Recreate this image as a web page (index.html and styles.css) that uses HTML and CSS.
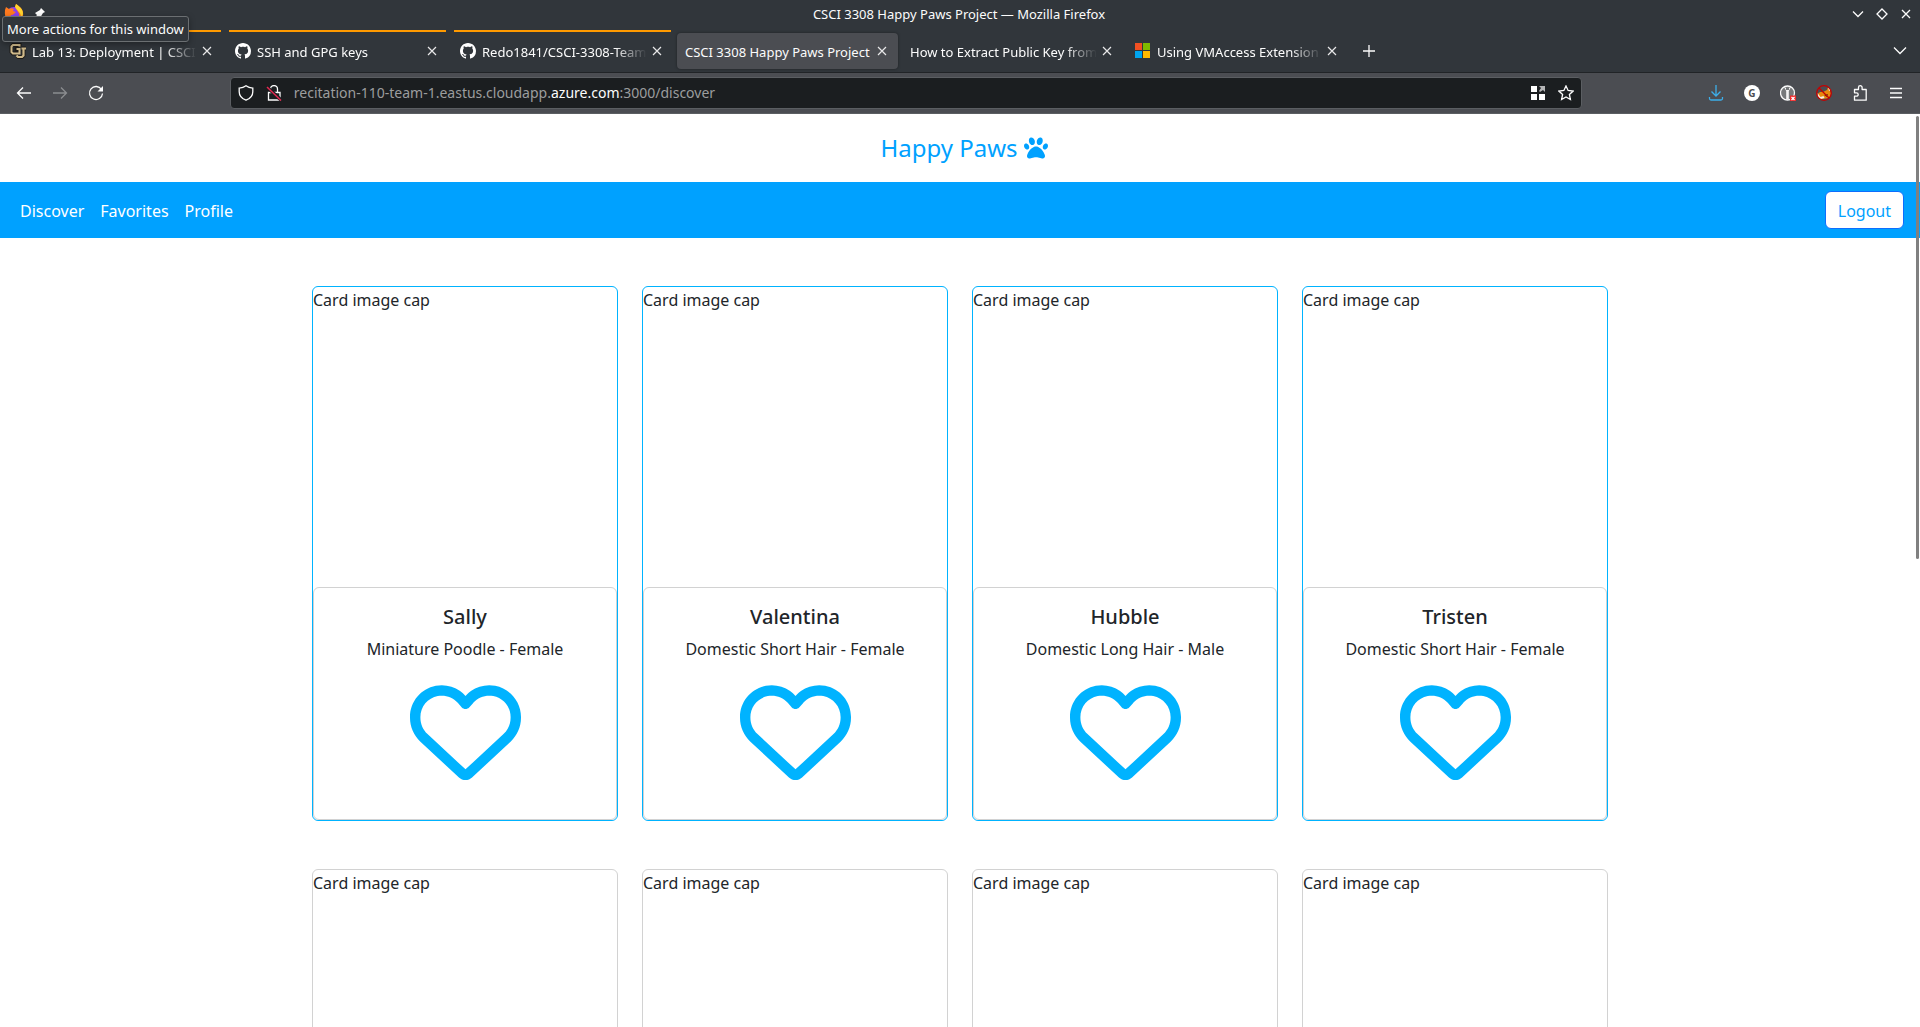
FILE: index.html
```html
<!DOCTYPE html>
<html lang="en">
<head>
<meta charset="utf-8">
<title>CSCI 3308 Happy Paws Project</title>
<link rel="stylesheet" href="styles.css">
</head>
<body>
<svg class="sprite" aria-hidden="true">
  <symbol id="heart" viewBox="0 0 512 512"><path d="M225.8 468.2l-2.5-2.3L48.1 303.2C17.4 274.7 0 234.7 0 192.8v-3.3c0-70.4 50-130.8 119.2-144C158.6 37.9 198.9 47 231 69.6c9 6.4 17.4 13.8 25 22.3c4.2-4.8 8.7-9.2 13.5-13.3c3.7-3.2 7.5-6.2 11.5-9c0 0 0 0 0 0C313.1 47 353.4 37.9 392.8 45.4C462 58.6 512 119.1 512 189.5v3.3c0 41.9-17.4 81.9-48.1 110.4L288.7 465.9l-2.5 2.3c-8.2 7.6-19 11.9-30.2 11.9s-22-4.2-30.2-11.9zM239.1 145c-.4-.3-.7-.7-1-1.1l-17.8-20c0 0-.1-.1-.1-.1c0 0 0 0 0 0c-23.1-25.9-58-37.7-92-31.2C81.6 101.5 48 142.1 48 189.5v3.3c0 28.5 11.9 55.8 32.8 75.2L256 430.7 431.2 268c20.9-19.4 32.8-46.7 32.8-75.2v-3.3c0-47.3-33.6-88-80.1-96.9c-34-6.5-69 5.4-92 31.2c0 0 0 0-.1 .1s0 0-.1 .1l-17.8 20c-.3 .4-.7 .7-1 1.1c-4.5 4.5-10.6 7-16.9 7s-12.4-2.5-16.9-7z"/></symbol>
  <symbol id="close" viewBox="0 0 16 16"><path d="M4 4l8 8M12 4l-8 8" fill="none" stroke="currentColor" stroke-width="1.2"/></symbol>
  <symbol id="github" viewBox="0 0 16 16"><path d="M8 0C3.58 0 0 3.58 0 8c0 3.54 2.29 6.53 5.47 7.59.4.07.55-.17.55-.38 0-.19-.01-.82-.01-1.49-2.01.37-2.53-.49-2.69-.94-.09-.23-.48-.94-.82-1.13-.28-.15-.68-.52-.01-.53.63-.01 1.08.58 1.23.82.72 1.21 1.87.87 2.33.66.07-.52.28-.87.51-1.07-1.78-.2-3.64-.89-3.64-3.95 0-.87.31-1.59.82-2.15-.08-.2-.36-1.02.08-2.12 0 0 .67-.21 2.2.82.64-.18 1.32-.27 2-.27s1.36.09 2 .27c1.53-1.04 2.2-.82 2.2-.82.44 1.1.16 1.92.08 2.12.51.56.82 1.27.82 2.15 0 3.07-1.87 3.75-3.65 3.95.29.25.54.73.54 1.48 0 1.07-.01 1.93-.01 2.2 0 .21.15.46.55.38A8.01 8.01 0 0 0 16 8c0-4.42-3.58-8-8-8z" fill="#fff"/></symbol>
</svg>

<div class="browser">
  <header class="titlebar">
    <div class="title-icons">
      <svg width="20" height="20" viewBox="0 0 20 20"><circle cx="10" cy="11" r="8" fill="#8a3ff0"/><path d="M1 6l1-3 3 2c2-1 3-1 5 0l-1 2 3 1c-2 1-2 3-5 3-1 3 2 5 5 4 3-2 4-4 2-7L11 3l1-3c3 2 6 4 7 8 1 7-3 12-9 12S0 14 1 6z" fill="#ff7a1f"/><path d="M11 3l1-3c4 3 7 5 7 10-1 3-2 3-2 3 0-5-4-6-6-10z" fill="#ffd42e"/></svg>
      <svg width="12" height="12" viewBox="0 0 12 12"><path d="M7 0l4 4-2 1-3 5-2-2-4 3 3-4-2-2 5-3z" fill="#fcfcfc"/></svg>
    </div>
    <span class="window-title">CSCI 3308 Happy Paws Project — Mozilla Firefox</span>
    <div class="window-buttons">
      <button class="window-button" aria-label="Minimize"><svg width="16" height="16" viewBox="0 0 16 16"><path d="M3 5.500l5 5 5-5"/></svg></button>
      <button class="window-button" aria-label="Maximize"><svg width="16" height="16" viewBox="0 0 16 16"><path d="M8 3l5 5-5 5-5-5z"/></svg></button>
      <button class="window-button" aria-label="Close"><svg width="16" height="16" viewBox="0 0 16 16"><path d="M4 4l8 8M12 4l-8 8"/></svg></button>
    </div>
    <div class="tooltip" role="tooltip">More actions for this window</div>
  </header>

  <nav class="tabstrip" aria-label="Tabs">
    <div class="tab tab-marked">
      <svg class="favicon" viewBox="0 0 16 16"><path d="M9.500 3.500V2H3L1.500 3.500V9L3 10.500h4M9.500 6H6.500v2.500M7 12.500L8.500 14H12l1.500-1.500V5.500H16M7.500 5.500v7" fill="none" stroke="#1d1a18" stroke-width="4"/><path d="M9.500 3.500V2H3L1.500 3.500V9L3 10.500h6.500V6H6.500" fill="none" stroke="#cfb98a" stroke-width="2"/><path d="M6.500 12.500L8 14h4l1.500-1.500V5.500M11.500 5.500H16" fill="none" stroke="#cfb98a" stroke-width="2.200"/></svg>
      <span class="tab-label">Lab 13: Deployment | CSCI 3308</span>
      <button class="tab-close" aria-label="Close tab"><svg width="16" height="16"><use href="#close"/></svg></button>
    </div>
    <div class="tab tab-marked">
      <svg class="favicon"><use href="#github"/></svg>
      <span class="tab-label">SSH and GPG keys</span>
      <button class="tab-close" aria-label="Close tab"><svg width="16" height="16"><use href="#close"/></svg></button>
    </div>
    <div class="tab tab-marked">
      <svg class="favicon"><use href="#github"/></svg>
      <span class="tab-label">Redo1841/CSCI-3308-Team-1</span>
      <button class="tab-close" aria-label="Close tab"><svg width="16" height="16"><use href="#close"/></svg></button>
    </div>
    <div class="tab tab-active">
      <span class="tab-label tab-label-full">CSCI 3308 Happy Paws Project</span>
      <button class="tab-close" aria-label="Close tab"><svg width="16" height="16"><use href="#close"/></svg></button>
    </div>
    <div class="tab">
      <span class="tab-label">How to Extract Public Key from a</span>
      <button class="tab-close" aria-label="Close tab"><svg width="16" height="16"><use href="#close"/></svg></button>
    </div>
    <div class="tab">
      <svg class="favicon" viewBox="0 0 16 16"><path d="M0 0h7v7H0z" fill="#f25022"/><path d="M8 0h7v7H8z" fill="#7fba00"/><path d="M0 8h7v7H0z" fill="#00a4ef"/><path d="M8 8h7v7H8z" fill="#ffb900"/></svg>
      <span class="tab-label">Using VMAccess Extension</span>
      <button class="tab-close" aria-label="Close tab"><svg width="16" height="16"><use href="#close"/></svg></button>
    </div>
    <button class="strip-button" aria-label="New tab"><svg width="16" height="16" viewBox="0 0 16 16"><path d="M8 2v12M2 8h12"/></svg></button>
    <button class="strip-button strip-end" aria-label="List all tabs"><svg width="16" height="16" viewBox="0 0 16 16"><path d="M2 4.500l6 6 6-6"/></svg></button>
  </nav>

  <div class="toolbar">
    <button class="tool" aria-label="Back"><svg viewBox="0 0 16 16"><path d="M15 8H1.500M7 2.500L1.500 8 7 13.500"/></svg></button>
    <button class="tool tool-off" aria-label="Forward" disabled><svg viewBox="0 0 16 16"><path d="M1 8h13.500M9 2.500L14.500 8 9 13.500"/></svg></button>
    <button class="tool" aria-label="Reload"><svg viewBox="0 0 16 16"><path d="M13.500 4.500A6.500 6.500 0 1 0 14.500 8.500"/><path d="M9.500 6.500h5.500V1z" fill="currentColor" stroke="none"/></svg></button>
    <div class="spacer"></div>
    <div class="urlbar">
      <svg viewBox="0 0 16 16"><path d="M8 .8C6 2.300 3.500 3 1.200 3.200v3.500c0 4 3 7 6.800 8.500 3.800-1.500 6.800-4.500 6.800-8.500V3.200C12.500 3 10 2.300 8 .8z"/></svg>
      <svg class="lock" viewBox="0 0 16 16"><path d="M4.500 7V4a3.500 3.500 0 0 1 7 0v3M2.500 7.500h11.500v7.500H2.500z"/><path d="M1 2l14 13" stroke="#1b1e20" stroke-width="3.500"/><path d="M1 2l14 13.500" stroke="#e22850" stroke-width="1.500"/></svg>
      <div class="address" role="textbox" aria-label="Address">recitation-110-team-1.eastus.cloudapp.<strong>azure.com</strong>:3000/discover</div>
      <svg viewBox="0 0 16 16"><path d="M1 1h6v6H1zM1 9h6v6H1zM9 9h6v6H9z" fill="#fff" stroke="none"/><path d="M9 1h6v6l-2-2-3 2-1-1 2-3z" fill="#b5b6b7" stroke="none"/></svg>
      <svg class="star" viewBox="0 0 16 16"><path d="M8 .9l2.100 4.600 5 .6-3.700 3.400 1 5L8 12l-4.400 2.500 1-5L.9 6.100l5-.6z"/></svg>
    </div>
    <div class="spacer"></div>
    <button class="tool tool-blue" aria-label="Downloads"><svg viewBox="0 0 16 16"><path d="M8 0v11M3.500 6.500L8 11l4.500-4.500M1.500 12v1.500a1.500 1.500 0 0 0 1.500 1.500h10a1.500 1.500 0 0 0 1.500-1.500V12"/></svg></button>
    <button class="tool" aria-label="Account extension"><span class="g-badge">G</span></button>
    <button class="tool" aria-label="Script extension"><svg viewBox="0 0 16 16"><circle cx="7.500" cy="8" r="7" fill="#77797b"/><path d="M4 2l2.200 4v8.500h2.600V6L11 2 9 3v2H6V3z" fill="#f4f4f4" stroke="none"/><path d="M10 10.500h6v6h-6z" fill="#f02a2a" stroke="none"/><path d="M11.500 12l3 3m0-3l-3 3" stroke="#fff"/></svg></button>
    <button class="tool" aria-label="Fox extension"><svg viewBox="0 0 16 16"><path d="M1.500 9l1.500 4 3 1 7-1 2-4-1-5-2-2-1 3-4 2-3 0z" fill="#e8870e" stroke="none"/><path d="M1.500 8l3 4 3-1 1 2-4 1-3-3zM12 2l3 3-2 1z" fill="#f2ece4" stroke="none"/><path d="M8 10l4-1-1 3z" fill="#5a3310" stroke="none"/><circle cx="8" cy="8" r="7.300" stroke="#c50000"/><path d="M3 3l10 10" stroke="#c50000"/></svg></button>
    <button class="tool" aria-label="Extensions"><svg viewBox="0 0 16 16"><path d="M2.500 15.200v-4h2a1.700 1.700 0 0 0 0-3.400h-2V4.500h4V2.500a1.800 1.800 0 0 1 3.600 0v2h4.100v10.700z" stroke-linejoin="round"/></svg></button>
    <button class="tool" aria-label="Menu"><svg viewBox="0 0 16 16"><path d="M2 3.500h12M2 8h12M2 12.500h12"/></svg></button>
  </div>

  <div class="page">
    <header class="site-header"><a class="brand" href="#">Happy Paws <svg width="24" height="24" viewBox="0 0 512 512"><path fill="currentColor" d="M226.500 92.900c14.300 42.900-.3 86.200-32.600 96.800s-70.100-15.600-84.400-58.500s.3-86.200 32.600-96.800s70.100 15.600 84.400 58.500zM100.400 198.600c18.900 32.400 14.300 70.100-10.200 84.100s-59.700-.9-78.500-33.300S-2.700 179.300 21.800 165.300s59.700 .9 78.500 33.300zM69.200 401.200C121.600 259.900 214.700 224 256 224s134.400 35.900 186.800 177.200c3.600 9.700 5.200 20.100 5.200 30.500v1.600c0 25.800-20.900 46.700-46.700 46.700c-11.500 0-22.900-1.400-34-4.200l-88-22c-15.300-3.800-31.300-3.800-46.600 0l-88 22c-11.100 2.800-22.500 4.200-34 4.200C84.900 480 64 459.100 64 433.300v-1.600c0-10.400 1.600-20.800 5.200-30.500zM421.800 282.700c-24.500-14-29.100-51.700-10.200-84.100s54-47.300 78.500-33.300s29.100 51.700 10.200 84.100s-54 47.300-78.500 33.300zM310.100 189.700c-32.300-10.600-46.900-53.900-32.600-96.800s52.100-69.100 84.400-58.500s46.900 53.900 32.600 96.800s-52.100 69.100-84.400 58.500z"/></svg></a></header>
    <nav class="navbar" aria-label="Site">
      <a class="nav-link" href="#">Discover</a>
      <a class="nav-link" href="#">Favorites</a>
      <a class="nav-link" href="#">Profile</a>
      <button class="logout">Logout</button>
    </nav>
    <main class="cards">
      <article class="card card-pet"><div class="card-image">Card image cap</div><div class="card-body"><h5>Sally</h5><p>Miniature Poodle - Female</p><button class="like" aria-label="Favorite Sally"><svg><use href="#heart"/></svg></button></div></article>
      <article class="card card-pet"><div class="card-image">Card image cap</div><div class="card-body"><h5>Valentina</h5><p>Domestic Short Hair - Female</p><button class="like" aria-label="Favorite Valentina"><svg><use href="#heart"/></svg></button></div></article>
      <article class="card card-pet"><div class="card-image">Card image cap</div><div class="card-body"><h5>Hubble</h5><p>Domestic Long Hair - Male</p><button class="like" aria-label="Favorite Hubble"><svg><use href="#heart"/></svg></button></div></article>
      <article class="card card-pet"><div class="card-image">Card image cap</div><div class="card-body"><h5>Tristen</h5><p>Domestic Short Hair - Female</p><button class="like" aria-label="Favorite Tristen"><svg><use href="#heart"/></svg></button></div></article>
      <article class="card"><div class="card-image">Card image cap</div></article>
      <article class="card"><div class="card-image">Card image cap</div></article>
      <article class="card"><div class="card-image">Card image cap</div></article>
      <article class="card"><div class="card-image">Card image cap</div></article>
    </main>
    <div class="scroll-thumb"></div>
  </div>
</div>
</body>
</html>
```
FILE: styles.css
```css
* { box-sizing: border-box; }
body {
  margin: 0;
  font-family: "Noto Sans", "Open Sans", sans-serif;
  font-size: 16px;
  line-height: 24px;
  color: #212529;
}
button {
  font: inherit;
  color: inherit;
  background: none;
  border: 0;
  padding: 0;
}
a { text-decoration: none; }
svg { display: block; flex: none; }
.sprite { position: absolute; width: 0; height: 0; }

.browser {
  height: 100vh;
  display: flex;
  flex-direction: column;
  overflow: hidden;
}

/* Window chrome */
.titlebar {
  position: relative;
  flex: none;
  display: grid;
  grid-template-columns: 1fr auto 1fr;
  align-items: center;
  height: 30px;
  padding: 0 6px 2px 4px;
  background: #31363b;
  color: #fcfcfc;
  font-size: 13px;
  line-height: 20px;
}
.title-icons { display: flex; align-items: center; gap: 10px; }
.window-buttons { display: flex; justify-content: flex-end; gap: 8px; }
.window-button svg, .strip-button svg, .toolbar svg {
  fill: none;
  stroke: currentColor;
  stroke-width: 1.3;
}
.tooltip {
  position: absolute;
  z-index: 2;
  left: 2px;
  top: 16px;
  padding: 2px 4px;
  border: 1px solid #6b6f72;
  border-radius: 3px;
  background: #31363b;
  box-shadow: 0 2px 6px rgba(0, 0, 0, .35);
  white-space: nowrap;
}

.tabstrip {
  flex: none;
  display: flex;
  height: 43px;
  background: #31363b;
  border-bottom: 1px solid #212427;
  color: #fcfcfc;
  font-size: 13px;
  line-height: 20px;
}
.tab {
  position: relative;
  flex: 0 1 225px;
  min-width: 0;
  display: flex;
  align-items: center;
  gap: 6px;
  height: 36px;
  margin-top: 3px;
  padding: 0 10px;
}
.tab-marked::before {
  content: "";
  position: absolute;
  left: 4px;
  right: 4px;
  top: -3px;
  height: 2px;
  background: #ff9a00;
}
.tab-active {
  flex-basis: 221px;
  margin: 3px 2px 0;
  padding: 0 8px;
  background: #4b4d52;
  border-radius: 4px;
  box-shadow: 0 0 3px rgba(0, 0, 0, .4);
}
.favicon { width: 16px; height: 16px; overflow: visible; }
.tab-label {
  flex: 1;
  min-width: 0;
  overflow: hidden;
  white-space: nowrap;
  margin-right: -4px;
  padding-top: 2px;
  mask-image: linear-gradient(to left, transparent, #000 32px);
}
.tab-label-full { mask-image: none; }
.tab-close svg { color: #e8e8e9; }
.strip-button { height: 36px; margin: 3px 11px 0; }
.strip-end { margin-left: auto; margin-right: 12px; }

.toolbar {
  flex: none;
  display: flex;
  align-items: center;
  height: 41px;
  padding: 0 6px;
  background: #4b4d52;
  border-bottom: 1px solid #5b5e62;
  color: #fcfcfc;
}
.toolbar svg { width: 16px; height: 16px; }
.tool {
  flex: none;
  width: 36px;
  height: 32px;
  display: grid;
  place-items: center;
}
.tool-off { color: #8b8d90; }
.tool-blue { color: #3daee9; }
.spacer { flex: 117 1 0; }
.urlbar {
  flex: 1350 1 0;
  min-width: 0;
  display: flex;
  align-items: center;
  gap: 12px;
  height: 32px;
  padding: 0 7px;
  background: #1b1e20;
  border: 1px solid #5b5e62;
  border-radius: 4px;
}
.address {
  flex: 1;
  min-width: 0;
  overflow: hidden;
  white-space: nowrap;
  font-size: 14px;
  color: #9b9d9e;
}
.address strong { font-weight: 400; color: #fcfcfc; }
.g-badge {
  width: 16px;
  height: 16px;
  border-radius: 50%;
  background: #fff;
  color: #4b4d52;
  font-size: 10px;
  font-weight: 700;
  line-height: 16px;
}

/* Site */
.page {
  position: relative;
  flex: 1;
  min-height: 0;
  overflow: hidden;
  background: #fff;
}
.site-header {
  display: flex;
  justify-content: center;
  padding: 16px 0 16px 8px;
}
.brand {
  display: flex;
  align-items: center;
  gap: 6px;
  color: #00a1ff;
  font-size: 24px;
  line-height: 36px;
}
.navbar {
  display: flex;
  align-items: center;
  padding: 9px 16px 9px 12px;
  background: #00a1ff;
}
.nav-link { padding: 2px 8px 0; color: #fff; }
.logout {
  margin-left: auto;
  padding: 7px 12px 5px;
  border: 1px solid #0d6efd;
  border-radius: 6px;
  background: #fff;
  color: #00a1ff;
}
.cards {
  display: grid;
  grid-template-columns: repeat(4, 1fr);
  gap: 48px 24px;
  max-width: 1320px;
  margin: 48px auto;
  padding: 0 12px;
}
.card {
  border: 1px solid #d2d2d2;
  border-radius: 6px;
}
.card-pet { border-color: #00b3ff; }
.card-image { height: 300px; padding-top: 1px; }
.card-body {
  padding: 17px 16px 16px;
  border: 1px solid #d2d2d2;
  border-radius: 6px;
  text-align: center;
}
.card-body h5 {
  margin: 0 0 8px;
  font-size: 20px;
  font-weight: 500;
  line-height: 24px;
}
.card-body p { margin: 0 0 15px; }
.like {
  display: block;
  margin: 0 auto;
  padding-bottom: 16px;
  color: #00b3ff;
}
.like svg { width: 111px; height: 111px; fill: currentColor; }
.scroll-thumb {
  position: absolute;
  right: 1px;
  top: 2px;
  width: 3px;
  height: 443px;
  border-radius: 2px;
  background: #808080;
}
```
